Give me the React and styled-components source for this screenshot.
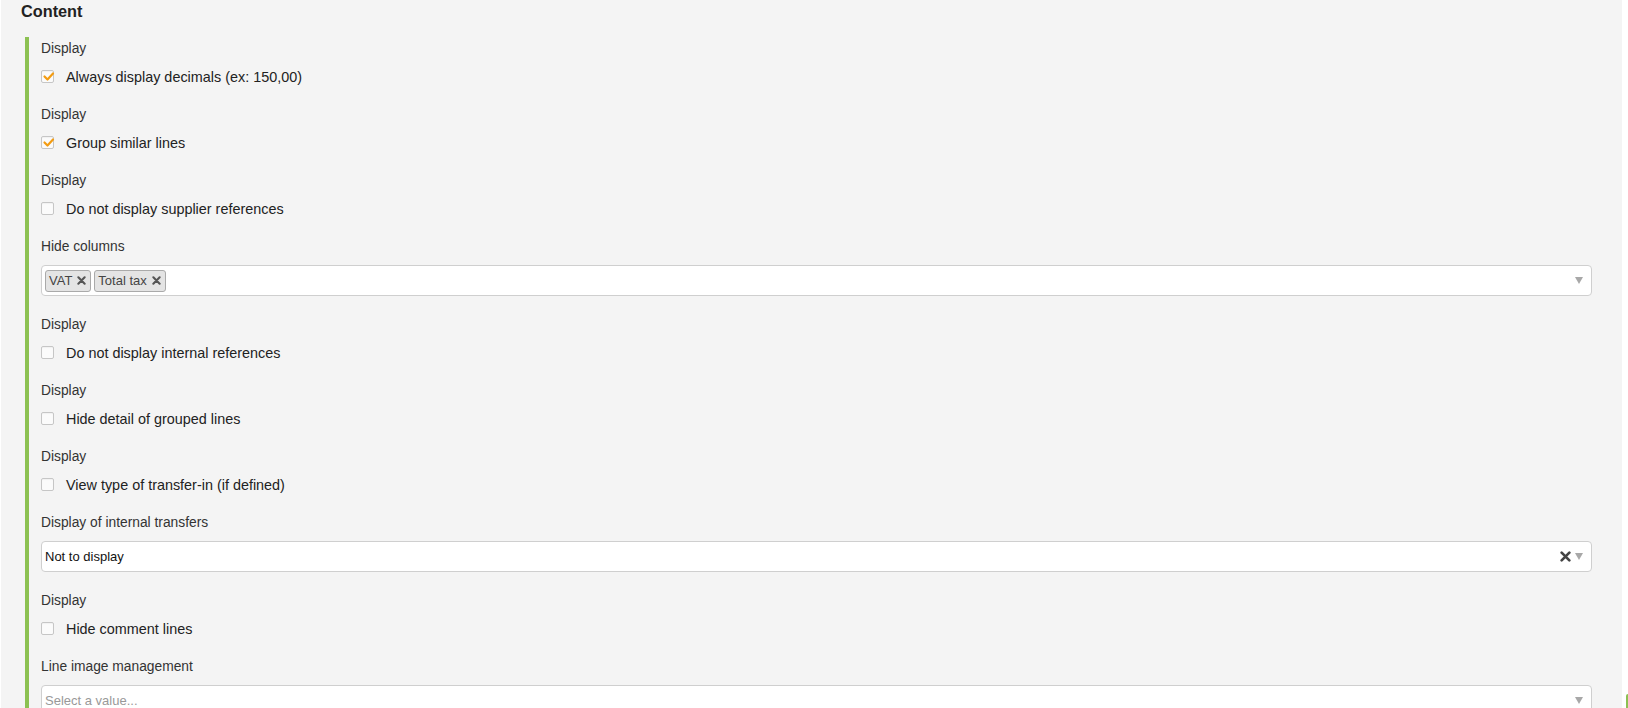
import React from 'react';
import styled, { createGlobalStyle } from 'styled-components';

const Global = createGlobalStyle`
  html, body {
    margin: 0;
    padding: 0;
    background: #fff;
    overflow: hidden;
  }
  body {
    font-family: "Liberation Sans", Arial, sans-serif;
    color: #333;
  }
  #root {
    height: 100vh;
    overflow: hidden;
  }
`

const Page = styled.div`
  display: flex;
  height: 100vh;
`

const Panel = styled.div`
  flex: 1;
  margin-left: 1px;
  padding: 1px 30px 0 20px;
  background: #f4f4f4;
`

const Gutter = styled.div`
  width: 6px;
  padding: 694px 0 0 4px;
  box-sizing: border-box;
`

const NextBar = styled.div`
  width: 4px;
  height: 24px;
  background: #8cc152;
  border-radius: 2px 0 0 0;
`

const Title = styled.h3`
  margin: 0 0 16px;
  font-size: 16.3px;
  line-height: 20px;
  font-weight: bold;
  color: #222;
`

const Section = styled.div`
  margin-left: 4px;
  padding: 3px 0 0 12px;
  border-left: 4px solid #8cc152;
`

const Field = styled.div`
  margin-bottom: 20px;
`

const Label = styled.div`
  font-size: 13.8px;
  line-height: 18px;
  color: #333;
  margin-bottom: 9px;
`

const CheckRow = styled.label`
  display: flex;
  align-items: center;
  gap: 12px;
  height: 19px;
  font-size: 14.4px;
  color: #222;
`

const Box = styled.span`
  width: 13px;
  height: 13px;
  box-sizing: border-box;
  border: 1px solid #c6c6c6;
  border-radius: 2px;
  background: #fbfbfb;
  box-shadow: inset 0 1px 1px rgba(0, 0, 0, 0.04);
  position: relative;
  flex: none;

  svg {
    position: absolute;
    left: 0;
    top: -1px;
  }
`

const SelectBox = styled.div`
  display: flex;
  align-items: center;
  height: 31px;
  box-sizing: border-box;
  padding: 0 8px 0 3px;
  background: #fff;
  border: 1px solid #cfcfcf;
  border-radius: 4px;
  font-size: 13px;
`

const Tags = styled.div`
  display: flex;
  gap: 3px;
  flex: 1;
`

const Tag = styled.span`
  display: inline-flex;
  align-items: center;
  gap: 5px;
  height: 22px;
  box-sizing: border-box;
  padding: 0 4px 0 3px;
  background: #e4e4e4;
  border: 1px solid #aaa;
  border-radius: 3px;
  color: #444;
  font-size: 13px;
`

const Value = styled.span`
  flex: 1;
  color: ${p => (p.$placeholder ? '#999' : '#111')};
`

const Clear = styled.span`
  display: flex;
  margin-right: 4px;
`

const Arrow = styled.span`
  width: 0;
  height: 0;
  border-left: 4px solid transparent;
  border-right: 4px solid transparent;
  border-top: 7px solid #a8a8a8;
`

const Cross = ({ size = 9, color = '#555', width = 2.3 }) => (
  <svg width={size} height={size} viewBox="0 0 10 10">
    <path d="M1.5 1.5 L8.5 8.5 M8.5 1.5 L1.5 8.5" stroke={color} strokeWidth={width} strokeLinecap="round" />
  </svg>
)

const Check = () => (
  <svg width="13" height="13" viewBox="0 0 13 13">
    <polyline points="2.5,6.5 5.5,9.5 11,3.5" fill="none" stroke="#f39c12" strokeWidth="2.2" strokeLinecap="round" strokeLinejoin="round" />
  </svg>
)

const CheckField = ({ label, text, checked }) => (
  <Field>
    <Label>{label}</Label>
    <CheckRow>
      <Box>{checked && <Check />}</Box>
      {text}
    </CheckRow>
  </Field>
)

const SelectField = ({ label, children, clearable }) => (
  <Field>
    <Label>{label}</Label>
    <SelectBox>
      {children}
      {clearable && (
        <Clear>
          <Cross size={11} color="#444" width={2.4} />
        </Clear>
      )}
      <Arrow />
    </SelectBox>
  </Field>
)

const App = () => (
  <Page>
    <Global />
    <Panel>
      <Title>Content</Title>
      <Section>
        <CheckField label="Display" text="Always display decimals (ex: 150,00)" checked />
        <CheckField label="Display" text="Group similar lines" checked />
        <CheckField label="Display" text="Do not display supplier references" />
        <SelectField label="Hide columns">
          <Tags>
            <Tag>VAT <Cross /></Tag>
            <Tag>Total tax <Cross /></Tag>
          </Tags>
        </SelectField>
        <CheckField label="Display" text="Do not display internal references" />
        <CheckField label="Display" text="Hide detail of grouped lines" />
        <CheckField label="Display" text="View type of transfer-in (if defined)" />
        <SelectField label="Display of internal transfers" clearable>
          <Value>Not to display</Value>
        </SelectField>
        <CheckField label="Display" text="Hide comment lines" />
        <SelectField label="Line image management">
          <Value $placeholder>Select a value...</Value>
        </SelectField>
      </Section>
    </Panel>
    <Gutter>
      <NextBar />
    </Gutter>
  </Page>
)

export default App
